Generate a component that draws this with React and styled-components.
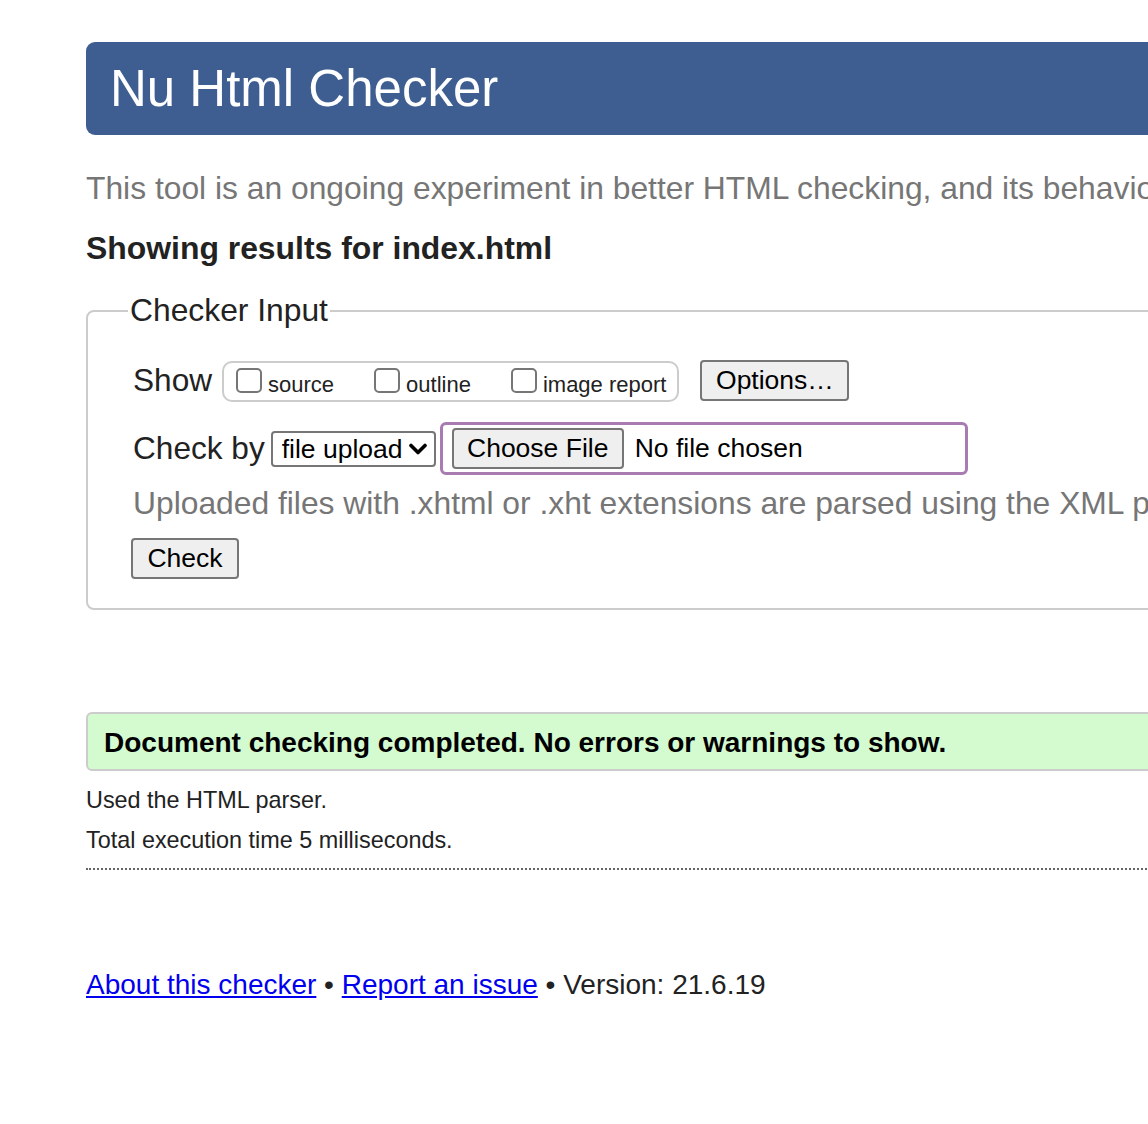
import React from 'react';
import styled, { createGlobalStyle } from 'styled-components';

const GlobalStyle = createGlobalStyle`
    html, body {
        margin: 0;
        padding: 0;
        overflow: hidden;
        background: #ffffff;
    }
    body {
        font-family: "Liberation Sans", Arial, Helvetica, sans-serif;
        color: #222222;
    }
`;

const Page = styled.div`
    width: 1500px;
    padding: 42px 0 60px 86px;
`;

const Header = styled.header`
    height: 93px;
    background-color: #3e5e91;
    border-radius: 9px;
    padding-left: 24px;
    display: flex;
    align-items: center;
`;

const Title = styled.h1`
    margin: 0;
    font-size: 51px;
    font-weight: normal;
    color: #ffffff;
    line-height: 1;
`;

const Intro = styled.p`
    margin: 35px 0 0;
    font-size: 31.8px;
    line-height: 37px;
    color: #767676;
    white-space: nowrap;
`;

const Heading = styled.h2`
    margin: 23px 0 0;
    font-size: 31.9px;
    line-height: 37px;
    font-weight: bold;
    color: #222222;
`;

const Fieldset = styled.fieldset`
    margin: 25px 0 0;
    padding: 30px 0 29px 45px;
    border: 2px solid #cccccc;
    border-radius: 8px;
    min-width: 0;
`;

const Legend = styled.legend`
    margin-left: -5px;
    padding: 0 2px;
    font-size: 31.8px;
    line-height: 37px;
    color: #222222;
`;

const Row = styled.div`
    display: flex;
    align-items: center;
    margin-top: ${p => p.$gap || 0}px;
`;

const Label = styled.span`
    font-size: 31.6px;
    line-height: 37px;
    color: #222222;
    margin-right: ${p => p.$space || 0}px;
`;

const CheckGroup = styled.span`
    display: flex;
    align-items: flex-end;
    height: 33px;
    padding: 0 11px 4px 12px;
    margin-top: 2px;
    border: 2px solid #cccccc;
    border-radius: 10px;
    gap: 40px;
    box-sizing: content-box;
`;

const CheckItem = styled.label`
    display: flex;
    align-items: flex-end;
    gap: 6px;
    font-size: 22px;
    line-height: 22px;
    color: #222222;
`;

const Checkbox = styled.input.attrs({ type: 'checkbox' })`
    appearance: none;
    margin: 0 0 3px;
    width: 26px;
    height: 25px;
    border: 2px solid #767676;
    border-radius: 5px;
    background: #ffffff;
    box-sizing: border-box;
`;

const Button = styled.button`
    font-family: "Liberation Sans", Arial, Helvetica, sans-serif;
    font-size: 26.5px;
    color: #000000;
    background-color: #efefef;
    border: 2px solid #767676;
    border-radius: 4px;
    height: 41px;
    width: ${p => p.$w}px;
    padding: 0;
    margin-left: ${p => p.$left || 0}px;
`;

const SelectBox = styled.span`
    display: flex;
    align-items: center;
    justify-content: space-between;
    width: 165px;
    height: 36px;
    box-sizing: border-box;
    border: 2px solid #767676;
    border-radius: 4px;
    padding: 0 7px 0 9px;
    margin-left: 6px;
    background: #ffffff;
`;

const Select = styled.select`
    appearance: none;
    border: none;
    outline: none;
    background: transparent;
    padding: 0;
    font-family: "Liberation Sans", Arial, Helvetica, sans-serif;
    font-size: 26.5px;
    color: #000000;
`;

const FileBox = styled.span`
    display: flex;
    align-items: center;
    gap: 11px;
    width: 528px;
    height: 53px;
    box-sizing: border-box;
    border: 3px solid #a87bb1;
    border-radius: 6px;
    padding-left: 9px;
    margin-left: 4px;
`;

const FileText = styled.span`
    font-size: 26.5px;
    color: #000000;
`;

const Note = styled.p`
    margin: 10px 0 0;
    font-size: 31.8px;
    line-height: 37px;
    color: #767676;
    white-space: nowrap;
`;

const Success = styled.div`
    margin-top: 102px;
    height: 59px;
    box-sizing: border-box;
    border: 2px solid #cccccc;
    border-radius: 6px;
    background-color: #d4fbd0;
    padding: 2px 0 0 16px;
    display: flex;
    align-items: center;
    font-size: 28px;
    font-weight: bold;
    color: #000000;
`;

const Detail = styled.p`
    margin: ${p => p.$top}px 0 0;
    font-size: 23.4px;
    line-height: 28px;
    color: #222222;
`;

const Divider = styled.hr`
    margin: 14px 0 0;
    border: none;
    border-bottom: 2px dotted #666666;
    height: 0;
`;

const Footer = styled.p`
    margin: 98px 0 0;
    font-size: 28px;
    line-height: 34px;
    color: #222222;
`;

const Link = styled.a`
    color: #0000ee;
    text-decoration: underline;
`;

function Chevron() {
    return (
        <svg width="18" height="12" viewBox="0 0 18 12">
            <path d="M2 2.5 L9 9.5 L16 2.5" fill="none" stroke="#000" strokeWidth="3.6" strokeLinecap="round" strokeLinejoin="round" />
        </svg>
    );
}

function App() {
    return (
        <Page>
            <GlobalStyle />
            <Header>
                <Title>Nu Html Checker</Title>
            </Header>
            <Intro>This tool is an ongoing experiment in better HTML checking, and its behavior remains subject to change</Intro>
            <Heading>Showing results for index.html</Heading>
            <Fieldset>
                <Legend>Checker Input</Legend>
                <Row>
                    <Label $space={10}>Show</Label>
                    <CheckGroup>
                        <CheckItem><Checkbox />source</CheckItem>
                        <CheckItem><Checkbox />outline</CheckItem>
                        <CheckItem><Checkbox />image report</CheckItem>
                    </CheckGroup>
                    <Button $w={149} $left={21}>Options…</Button>
                </Row>
                <Row $gap={20}>
                    <Label>Check by</Label>
                    <SelectBox>
                        <Select defaultValue="file">
                            <option value="file">file upload</option>
                        </Select>
                        <Chevron />
                    </SelectBox>
                    <FileBox>
                        <Button $w={172}>Choose File</Button>
                        <FileText>No file chosen</FileText>
                    </FileBox>
                </Row>
                <Note>Uploaded files with .xhtml or .xht extensions are parsed using the XML parser.</Note>
                <Row $gap={16}>
                    <Button $w={108} $left={-2}>Check</Button>
                </Row>
            </Fieldset>
            <Success>Document checking completed. No errors or warnings to show.</Success>
            <Detail $top={15}>Used the HTML parser.</Detail>
            <Detail $top={12}>Total execution time 5 milliseconds.</Detail>
            <Divider />
            <Footer>
                <Link href="#about">About this checker</Link> • <Link href="#issue">Report an issue</Link> • Version: 21.6.19
            </Footer>
        </Page>
    );
}

export default App;
